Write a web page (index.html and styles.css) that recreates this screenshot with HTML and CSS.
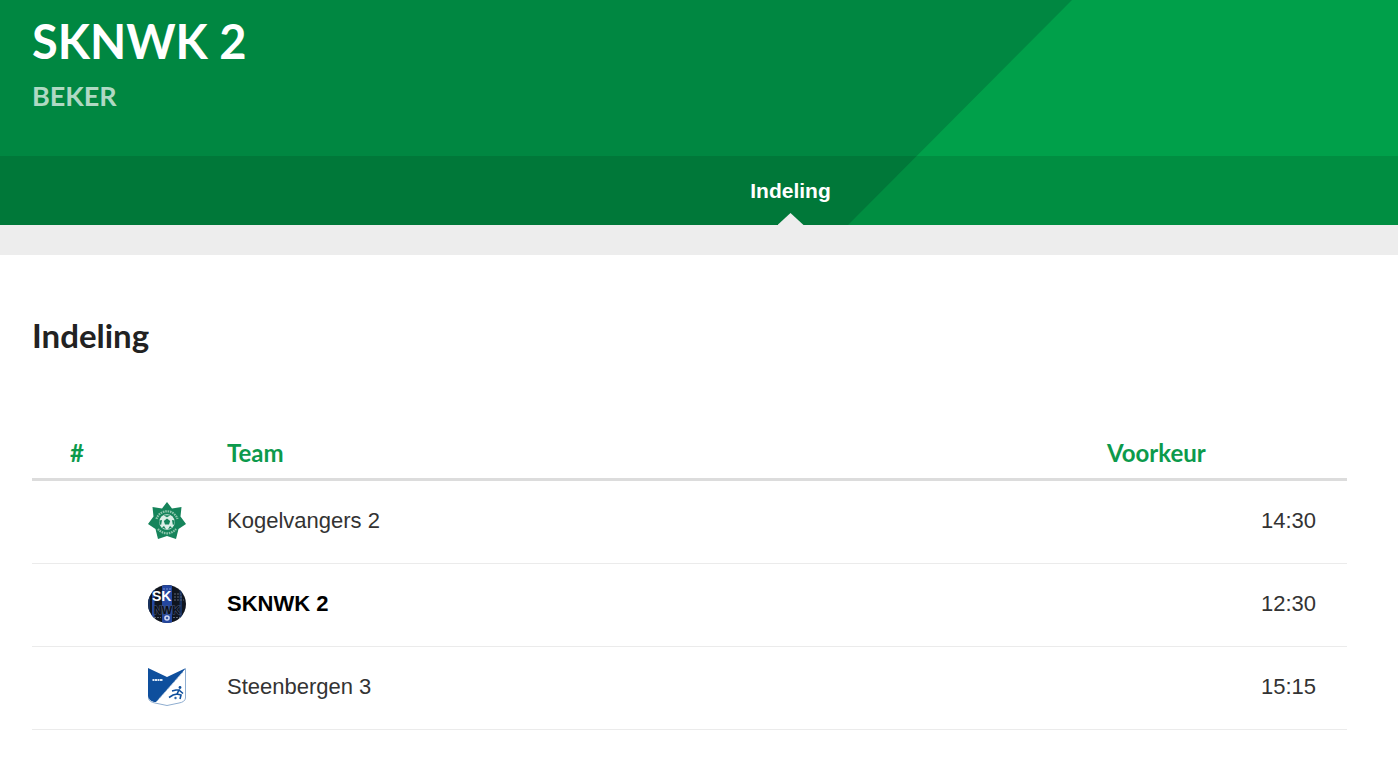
FILE: index.html
```html
<!DOCTYPE html>
<html lang="nl">
<head>
<meta charset="utf-8">
<meta name="viewport" content="width=device-width, initial-scale=1">
<title>SKNWK 2 - Beker</title>
<link rel="stylesheet" href="styles.css">
</head>
<body>
<header class="hero">
  <div class="hero-text">
    <h1 class="hero-title">SKNWK 2</h1>
    <p class="hero-subtitle">BEKER</p>
  </div>
  <nav class="tabs">
    <a class="tab" href="#indeling" aria-current="page">Indeling</a>
  </nav>
</header>
<div class="strip"></div>
<main class="content" id="indeling">
  <h2 class="section-title">Indeling</h2>
  <table class="teams">
    <colgroup>
      <col class="col-rank"><col class="col-logo"><col><col class="col-time">
    </colgroup>
    <thead>
      <tr><th class="rank" scope="col">#</th><td></td><th scope="col">Team</th><th scope="col">Voorkeur</th></tr>
    </thead>
    <tbody>
      <tr>
        <td></td>
        <td><svg class="logo" viewBox="0 0 38 38" aria-hidden="true">
          <path fill="#16845b" d="M19 0L24 6.500L33.500 5L32.500 14.500L38 22L30.500 27L28 37L19 34L10 37L7.500 27L0 22L5.500 14.500L4.500 5L14 6.500Z"/>
          <path fill="none" stroke="#8cc5ab" stroke-width="2.200" stroke-dasharray="1.600 .8" d="M8.500 17A11 11 0 0 1 29.500 17M10 27A11.500 11.500 0 0 0 28 27"/>
          <circle cx="19" cy="20" r="7.800" fill="#dceee6"/>
          <path fill="#16845b" d="M19 16.600L22.200 18.900L21 22.600H17L15.800 18.900ZM15.500 13.200H22.500L19 15.300ZM11.300 18.500L14 18L13.200 22.800L11.800 22.500ZM26.700 18.500L24 18L24.800 22.800L26.200 22.500ZM14 25.500L16 24L18 27.300ZM24 25.500L22 24L20 27.300Z"/>
        </svg></td>
        <td>Kogelvangers 2</td><td class="time">14:30</td>
      </tr>
      <tr class="own">
        <td></td>
        <td><svg class="logo" viewBox="0 0 38 38" aria-hidden="true">
          <circle cx="19" cy="19" r="19" fill="#10151f"/>
          <path fill="#2447a0" d="M14 .7Q19-.7 24 .7V37.300Q19 38.700 14 37.300ZM4 7.300L6.500 4.800V33.200L4 30.700Z"/>
          <path fill="#17315f" d="M31.500 4.800L34 7.300V30.700L31.500 33.200ZM0 19Q0 14 2 11V27Q0 24 0 19Z"/>
          <path stroke="#5b6474" stroke-width="1" stroke-dasharray="2 1" d="M26 9H33M26 12H35M26 15H36M6 32.500H13M25 32.500H32"/>
          <path stroke="#7892d2" stroke-width="1" stroke-dasharray="2 1" d="M15 4H23"/>
          <text class="crest-nwk" x="19" y="29" text-anchor="middle">NWK</text>
          <text class="crest-sk" x="4" y="16">SK</text>
          <circle cx="19" cy="33" r="2.800" fill="#d3daf1"/>
          <path fill="#2447a0" d="M19 31.500L20.500 33L19 34.500L17.500 33Z"/>
        </svg></td>
        <td>SKNWK 2</td><td class="time">12:30</td>
      </tr>
      <tr>
        <td></td>
        <td><svg class="logo" viewBox="0 0 38 38" aria-hidden="true">
          <path fill="#fff" d="M.5 1L19 10L37.500 1V30Q37 34 31 35L19 37.500L7 35Q1 34 .5 30Z"/>
          <path fill="#0e4f9d" d="M0 0L19 9L38 0L8 34L6 34Q0 32 0 28Z"/>
          <path fill="none" stroke="#8eadd0" d="M37.500 1V30Q37 34 31 35L19 37.500L7 35Q1 34 .5 30"/>
          <path stroke="#7199c6" stroke-width="1" stroke-dasharray="1 1" d="M35 4L9 33"/>
          <path stroke="#dce9f7" stroke-width="2" stroke-dasharray="2 .5" d="M4.500 12H15"/>
          <circle cx="32" cy="19.500" r="1.400" fill="#0e4f9d"/>
          <path fill="none" stroke="#0e4f9d" stroke-width="1.600" d="M24 23L28 22L31 22L29 26L33 27L32 31M29 26L25 27L21 29.500M31 22L35 25.500"/>
          <circle cx="27.500" cy="30" r="1.200" fill="#2d68ab"/>
        </svg></td>
        <td>Steenbergen 3</td><td class="time">15:15</td>
      </tr>
    </tbody>
  </table>
</main>
</body>
</html>
```
FILE: styles.css
```css
* { box-sizing: border-box; }
body {
  margin: 0;
  background: #fff;
  color: #333;
  font-family: "Liberation Sans", Arial, sans-serif;
  font-size: 22px;
}
.hero {
  position: relative;
  isolation: isolate;
  background: #008741;
  color: #fff;
}
.hero::before {
  content: "";
  position: absolute;
  inset: 0;
  z-index: -1;
  background: #00a04a;
  clip-path: polygon(calc(100% - 326px) 0, 100% 0, 100% 100%, calc(100% - 550px) 100%);
}
.hero-text {
  min-height: 156px;
  padding: 12px 32px;
}
.hero-title {
  margin: 0;
  font: 700 47px/58px Lato, sans-serif;
}
.hero-subtitle {
  margin: 10px 0 0;
  color: rgba(255, 255, 255, .7);
  font: 700 27px/32px Lato, sans-serif;
}
.tabs {
  display: flex;
  justify-content: center;
  padding-left: 183px;
  background: rgba(0, 0, 0, .11);
}
.tab {
  position: relative;
  padding: 23px 0 22px;
  color: #fff;
  font-size: 21px;
  font-weight: 700;
  line-height: 24px;
  text-decoration: none;
}
.tab::after {
  content: "";
  position: absolute;
  bottom: 0;
  left: 50%;
  width: 26px;
  height: 12px;
  margin-left: -13px;
  background: #ededed;
  clip-path: polygon(50% 0, 100% 100%, 0 100%);
}
.strip {
  height: 30px;
  background: #ededed;
}
.content { padding: 59px 51px 28px 32px; }
.section-title {
  margin: 0 0 67px;
  color: #222;
  font: 700 33px/42px Lato, sans-serif;
}
.teams {
  width: 100%;
  border-collapse: separate;
  border-spacing: 0;
  table-layout: fixed;
}
.col-rank { width: 90px; }
.col-logo { width: 105px; }
.col-time { width: 240px; }
.teams th,
.teams td {
  padding: 0;
  text-align: left;
}
.teams thead th,
.teams thead td {
  height: 58px;
  padding-top: 4px;
  border-bottom: 3px solid #dcdcdc;
  color: #0c9a4c;
  font: 700 24px/30px Lato, sans-serif;
}
.teams .rank { text-align: center; }
.teams tbody td {
  height: 83px;
  padding-bottom: 2px;
  border-bottom: 1px solid #ebebeb;
}
.teams .time {
  padding-right: 31px;
  text-align: right;
}
.own td:nth-child(3) {
  color: #000;
  font-weight: 700;
}
.logo {
  display: block;
  width: 38px;
  height: 38px;
  margin-left: 26px;
}
.crest-sk {
  fill: #fff;
  font-size: 14px;
  font-weight: 700;
}
.crest-nwk {
  fill: #0a0e17;
  stroke: #4a5a7c;
  stroke-width: 1px;
  paint-order: stroke;
  font-size: 11px;
  font-weight: 700;
}
```
